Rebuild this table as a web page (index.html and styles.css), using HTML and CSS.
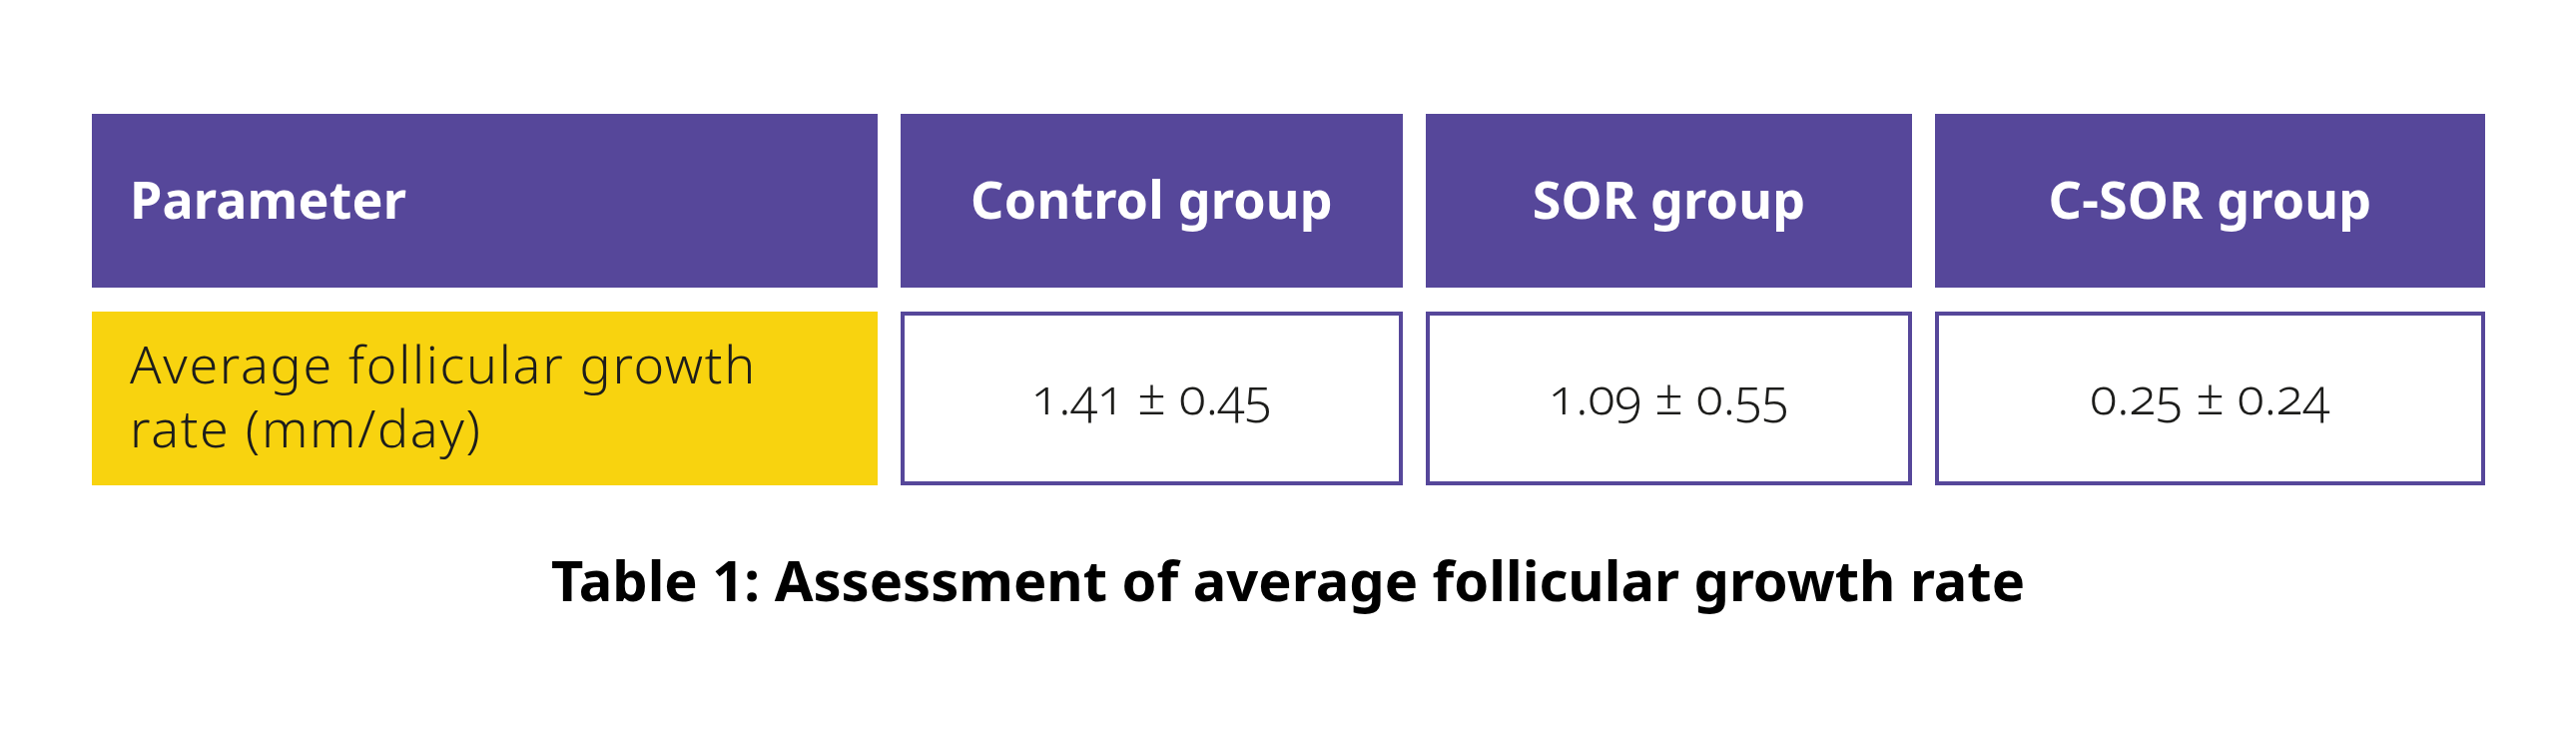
FILE: index.html
```html
<!DOCTYPE html>
<html lang="en">
<head>
<meta charset="utf-8">
<title>Table 1: Assessment of average follicular growth rate</title>
<link rel="stylesheet" href="styles.css">
</head>
<body>
<main class="page">
  <div class="table">
    <div class="cell head head-left">Parameter</div>
    <div class="cell head">Control group</div>
    <div class="cell head">SOR group</div>
    <div class="cell head">C-SOR group</div>
    <div class="cell label">Average follicular growth<br>rate (mm/day)</div>
    <div class="cell value">1.41 ± 0.45</div>
    <div class="cell value">1.09 ± 0.55</div>
    <div class="cell value">0.25 ± 0.24</div>
  </div>
  <p class="caption">Table 1: Assessment of average follicular growth rate</p>
</main>
</body>
</html>
```
FILE: styles.css
```css
html, body {
  margin: 0;
  padding: 0;
  background: #ffffff;
}

.page {
  width: 2580px;
  height: 730px;
  box-sizing: border-box;
  padding: 114px 0 0 92px;
  font-family: "Noto Sans", "Open Sans", sans-serif;
}

.table {
  display: grid;
  grid-template-columns: 787px 503px 487px 551px;
  grid-template-rows: 174px 174px;
  column-gap: 23px;
  row-gap: 24px;
}

.cell {
  display: flex;
  align-items: center;
  justify-content: center;
  box-sizing: border-box;
  padding-bottom: 6px;
}

.head {
  background: #56479a;
  color: #ffffff;
  font-weight: 700;
  font-size: 52px;
  letter-spacing: 0.2px;
}

.head-left {
  justify-content: flex-start;
  padding-left: 38px;
}

.label {
  background: #f8d30f;
  color: #1d1d1b;
  justify-content: flex-start;
  padding-left: 38px;
  font-size: 52px;
  line-height: 64px;
  font-weight: 350;
  letter-spacing: 1.7px;
}

.value {
  background: #ffffff;
  border: 4px solid #56479a;
  color: #1d1d1b;
  font-size: 50px;
  font-weight: 350;
  font-variant-numeric: oldstyle-nums;
}

.caption {
  margin: 0;
  padding-top: 56px;
  padding-right: 92px;
  text-align: center;
  font-size: 56px;
  font-weight: 700;
  color: #000000;
}
```
